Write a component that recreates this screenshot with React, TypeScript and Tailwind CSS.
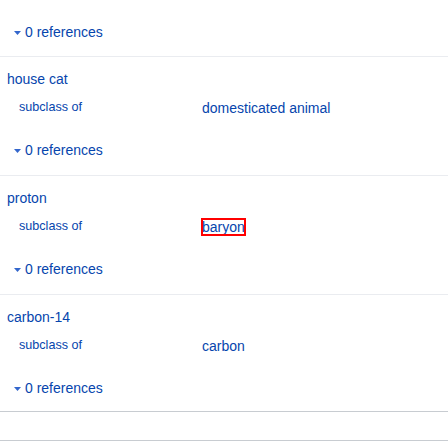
const items = [
  { label: 'house cat', value: 'domesticated animal', marked: false },
  { label: 'proton', value: 'baryon', marked: true },
  { label: 'carbon-14', value: 'carbon', marked: false },
];

function References() {
  return (
    <div className="flex items-center pl-[14px] text-[14px] leading-[16px] text-[#0645ad]">
      <svg width="7" height="4" viewBox="0 0 7 4" className="mr-[4px] mt-[1px]">
        <path d="M0 0 H7 L3.5 4 Z" fill="#3366cc" />
      </svg>
      <span>0 references</span>
    </div>
  );
}

export default function App() {
  return (
    <div className="w-[448px] h-[448px] bg-white font-['Liberation_Sans',Arial,sans-serif] text-[#0645ad] overflow-hidden">
      <div className="pt-[24px] pb-[16px]">
        <References />
      </div>

      {items.map((item, i) => (
        <div
          key={item.label}
          className={
            i < items.length - 1
              ? 'border-t border-[#eaecf0] pt-[14px] pb-[17px]'
              : 'border-t border-[#eaecf0] pt-[14px] pb-[15px]'
          }
        >
          <div className="pl-[7px] text-[14px] leading-[16px]">{item.label}</div>
          <div className="mt-[13px] flex items-start">
            <div className="w-[202px] pl-[19px] text-[12.6px] leading-[14.5px]">subclass of</div>
            <div className="text-[14px] leading-[16px]">
              {item.marked ? (
                <span className="outline-2 outline-offset-[-1px] outline-[#ff0000]">{item.value}</span>
              ) : (
                item.value
              )}
            </div>
          </div>
          <div className="mt-[26px]">
            <References />
          </div>
        </div>
      ))}

      <div className="border-t border-[#c8ccd1] h-[29px]" />
      <div className="border-t border-[#c8ccd1]" />
    </div>
  );
}
